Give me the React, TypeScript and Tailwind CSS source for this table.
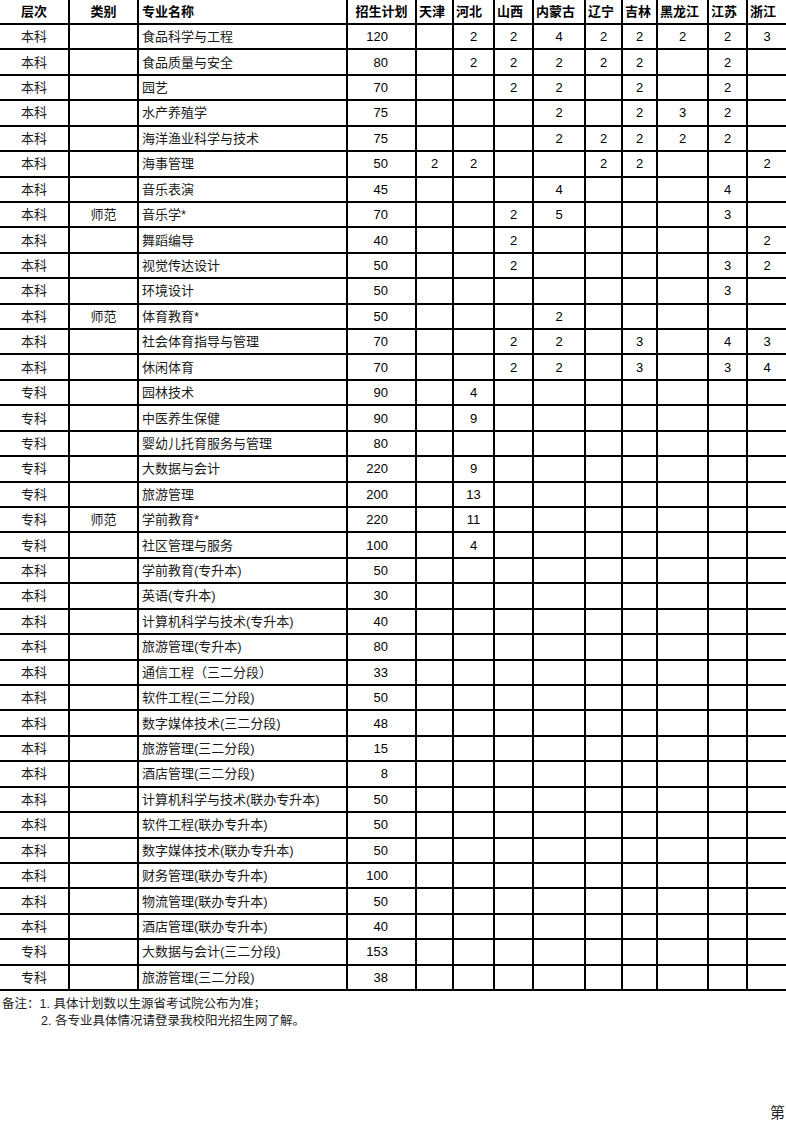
import React from "react";

type Row = [string, string, string, string, ...string[]];

const headers = ["层次", "类别", "专业名称", "招生计划", "天津", "河北", "山西", "内蒙古", "辽宁", "吉林", "黑龙江", "江苏", "浙江"];

const rows: string[][] = [
  ["本科", "", "食品科学与工程", "120", "", "2", "2", "4", "2", "2", "2", "2", "3"],
  ["本科", "", "食品质量与安全", "80", "", "2", "2", "2", "2", "2", "", "2", ""],
  ["本科", "", "园艺", "70", "", "", "2", "2", "", "2", "", "2", ""],
  ["本科", "", "水产养殖学", "75", "", "", "", "2", "", "2", "3", "2", ""],
  ["本科", "", "海洋渔业科学与技术", "75", "", "", "", "2", "2", "2", "2", "2", ""],
  ["本科", "", "海事管理", "50", "2", "2", "", "", "2", "2", "", "", "2"],
  ["本科", "", "音乐表演", "45", "", "", "", "4", "", "", "", "4", ""],
  ["本科", "师范", "音乐学*", "70", "", "", "2", "5", "", "", "", "3", ""],
  ["本科", "", "舞蹈编导", "40", "", "", "2", "", "", "", "", "", "2"],
  ["本科", "", "视觉传达设计", "50", "", "", "2", "", "", "", "", "3", "2"],
  ["本科", "", "环境设计", "50", "", "", "", "", "", "", "", "3", ""],
  ["本科", "师范", "体育教育*", "50", "", "", "", "2", "", "", "", "", ""],
  ["本科", "", "社会体育指导与管理", "70", "", "", "2", "2", "", "3", "", "4", "3"],
  ["本科", "", "休闲体育", "70", "", "", "2", "2", "", "3", "", "3", "4"],
  ["专科", "", "园林技术", "90", "", "4"],
  ["专科", "", "中医养生保健", "90", "", "9"],
  ["专科", "", "婴幼儿托育服务与管理", "80"],
  ["专科", "", "大数据与会计", "220", "", "9"],
  ["专科", "", "旅游管理", "200", "", "13"],
  ["专科", "师范", "学前教育*", "220", "", "11"],
  ["专科", "", "社区管理与服务", "100", "", "4"],
  ["本科", "", "学前教育(专升本)", "50"],
  ["本科", "", "英语(专升本)", "30"],
  ["本科", "", "计算机科学与技术(专升本)", "40"],
  ["本科", "", "旅游管理(专升本)", "80"],
  ["本科", "", "通信工程（三二分段）", "33"],
  ["本科", "", "软件工程(三二分段)", "50"],
  ["本科", "", "数字媒体技术(三二分段)", "48"],
  ["本科", "", "旅游管理(三二分段)", "15"],
  ["本科", "", "酒店管理(三二分段)", "8"],
  ["本科", "", "计算机科学与技术(联办专升本)", "50"],
  ["本科", "", "软件工程(联办专升本)", "50"],
  ["本科", "", "数字媒体技术(联办专升本)", "50"],
  ["本科", "", "财务管理(联办专升本)", "100"],
  ["本科", "", "物流管理(联办专升本)", "50"],
  ["本科", "", "酒店管理(联办专升本)", "40"],
  ["专科", "", "大数据与会计(三二分段)", "153"],
  ["专科", "", "旅游管理(三二分段)", "38"],
];

const cjk = "font-['Liberation_Sans','Noto_Sans_CJK_SC',sans-serif]";

function HeaderCell({ text, i }: { text: string; i: number }) {
  let align = "justify-start pl-[2px]";
  if (i === 0 || i === 1 || i === 3) align = "justify-center";
  if (i === 2) align = "justify-start pl-[3px]";
  return (
    <div className={`bg-white flex items-center ${align} text-[13px] font-bold text-black whitespace-nowrap overflow-hidden leading-none`}>
      {text}
    </div>
  );
}

function DataCell({ text, i }: { text: string; i: number }) {
  let cls = "justify-center";
  if (i === 2) cls = "justify-start pl-[3px]";
  if (i === 3) cls = "justify-end pr-[27px]";
  const isNum = i >= 3;
  return (
    <div
      className={`bg-white flex items-center ${cls} whitespace-nowrap overflow-hidden leading-none ${
        isNum ? "text-[13px] text-black" : "text-[13px] text-[#1a1a1a]"
      }`}
    >
      {text}
    </div>
  );
}

export default function App() {
  return (
    <div className={`w-[786px] h-[1132px] bg-white overflow-hidden ${cjk}`}>
      <div className="bg-black pb-[2px] grid grid-cols-[68px_67px_207px_67px_35px_39px_37px_50px_35px_33px_49px_37px_38px] grid-rows-[23px_repeat(38,23.43px)] gap-[2px]">
        {headers.map((h, i) => (
          <HeaderCell key={"h" + i} text={h} i={i} />
        ))}
        {rows.map((r, ri) =>
          headers.map((_, ci) => <DataCell key={ri + "-" + ci} text={r[ci] ?? ""} i={ci} />)
        )}
      </div>
      <div className="mt-[5px] pl-[2px] text-[12.5px] leading-[17px] text-[#222]">
        <div>备注：1. 具体计划数以生源省考试院公布为准；</div>
        <div className="pl-[39px]">2. 各专业具体情况请登录我校阳光招生网了解。</div>
      </div>
      <div className="mt-[74px] flex justify-end pr-[1px] text-[15px] leading-[18px] text-[#222]">第</div>
    </div>
  );
}
